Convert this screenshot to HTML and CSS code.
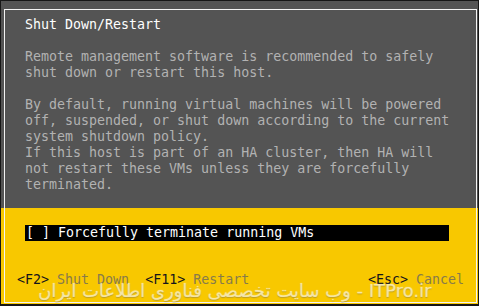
FILE: index.html
```html
<!DOCTYPE html>
<html>
<head>
<meta charset="utf-8">
<link rel="stylesheet" href="styles.css">
</head>
<body>
<div class="screen">
  <div class="dialog">
    <div class="body">
      <div class="title">Shut Down/Restart</div>
      <p class="para">Remote management software is recommended to safely<br>shut down or restart this host.</p>
      <p class="para">By default, running virtual machines will be powered<br>off, suspended, or shut down according to the current<br>system shutdown policy.<br>If this host is part of an HA cluster, then HA will<br>not restart these VMs unless they are forcefully<br>terminated.</p>
    </div>
    <div class="footer">
      <div class="option">[ ] Forcefully terminate running VMs</div>
      <div class="keys">
        <div class="group"><span class="key">&lt;F2&gt;</span> <span class="label">Shut Down</span>  <span class="key">&lt;F11&gt;</span> <span class="label">Restart</span></div>
        <div class="group"><span class="key">&lt;Esc&gt;</span> <span class="label">Cancel</span></div>
      </div>
      <div class="watermark"><span dir="rtl">وب سایت تخصصی فناوری اطلاعات ایران</span> - ITPro.ir</div>
    </div>
  </div>
</div>
</body>
</html>
```
FILE: styles.css
```css
html, body {
  margin: 0;
  padding: 0;
  background: #111;
}
.screen {
  box-sizing: border-box;
  width: 479px;
  height: 306px;
  border-style: solid;
  border-color: #161616;
  border-width: 1px 1px 2px 1px;
  background: linear-gradient(#545454 0, #545454 207px, #f8c800 207px, #f8c800 100%);
  overflow: hidden;
  font-family: "DejaVu Sans Mono", "Liberation Mono", monospace;
  font-size: 13.3px;
  line-height: 16px;
}
.dialog {
  box-sizing: border-box;
  margin: 8px 1px 1px 3px;
  height: 294px;
  border: 1px solid #f4f4f4;
  display: flex;
  flex-direction: column;
}
.body {
  background: #545454;
  height: 198px;
  padding: 7px 0 0 20px;
  box-sizing: border-box;
  color: #b2b2b2;
}
.title {
  color: #ffffff;
  margin-bottom: 16px;
  white-space: pre;
}
.para {
  margin: 0 0 16px 0;
  white-space: pre;
}
.footer {
  position: relative;
  flex: 1;
  background: #f8c800;
  padding-top: 17px;
  box-sizing: border-box;
}
.option {
  margin-left: 20px;
  width: 424px;
  height: 16px;
  background: #000;
  color: #fff;
  padding-left: 1px;
  box-sizing: border-box;
  white-space: pre;
}
.keys {
  display: flex;
  justify-content: space-between;
  margin-top: 31px;
  padding: 0 12px;
  white-space: pre;
}
.key {
  color: #14141c;
}
.label {
  color: #877b4c;
}
.watermark {
  position: absolute;
  left: 33px;
  top: 73px;
  font-family: "DejaVu Sans", sans-serif;
  font-size: 18px;
  line-height: 20px;
  color: rgba(250, 235, 170, 0.55);
  text-shadow: 0 0 1px rgba(255, 255, 255, 0.7), 0 1px 1px rgba(110, 95, 40, 0.45);
  white-space: nowrap;
}
```
